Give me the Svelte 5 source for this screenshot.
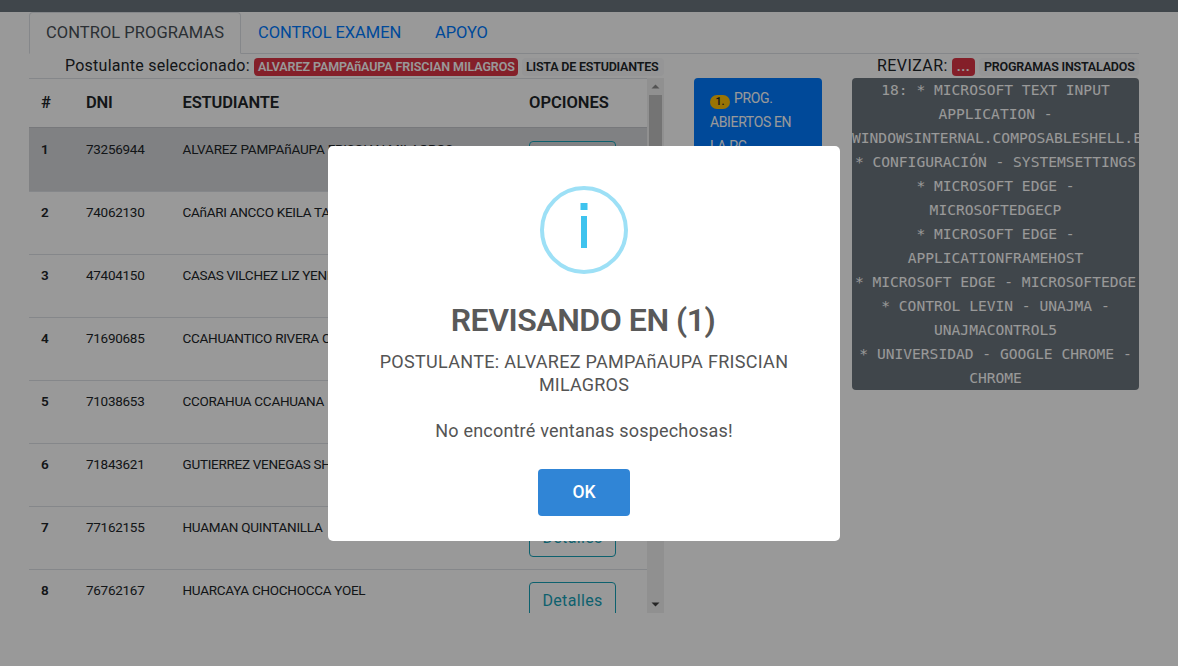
<script>
  const students = [
    ['73256944', 'ALVAREZ PAMPAñAUPA FRISCIAN MILAGROS'],
    ['74062130', 'CAñARI ANCCO KEILA TATIANA'],
    ['47404150', 'CASAS VILCHEZ LIZ YENI'],
    ['71690685', 'CCAHUANTICO RIVERA CARLOS'],
    ['71038653', 'CCORAHUA CCAHUANA'],
    ['71843621', 'GUTIERREZ VENEGAS SHEYLA'],
    ['77162155', 'HUAMAN QUINTANILLA'],
    ['76762167', 'HUARCAYA CHOCHOCCA YOEL']
  ];
  const programs = [
    '18: * MICROSOFT TEXT INPUT', 'APPLICATION -', 'WINDOWSINTERNAL.COMPOSABLESHELL.E',
    '* CONFIGURACIÓN - SYSTEMSETTINGS', '* MICROSOFT EDGE -', 'MICROSOFTEDGECP',
    '* MICROSOFT EDGE -', 'APPLICATIONFRAMEHOST', '* MICROSOFT EDGE - MICROSOFTEDGE',
    '* CONTROL LEVIN - UNAJMA -', 'UNAJMACONTROL5', '* UNIVERSIDAD - GOOGLE CHROME -', 'CHROME'
  ];
</script>

<div class="page">
  <header></header>
  <main>
    <nav>
      <a class="active" href="#programas">CONTROL PROGRAMAS</a>
      <a class="exam" href="#examen">CONTROL EXAMEN</a>
      <a href="#apoyo">APOYO</a>
    </nav>
    <div class="columns">
      <section>
        <div class="caption">
          <span class="who">Postulante seleccionado:</span>
          <b class="badge danger">ALVAREZ PAMPAñAUPA FRISCIAN MILAGROS</b>
          <b class="badge light">LISTA DE ESTUDIANTES</b>
        </div>
        <div class="scroller">
          <div class="rows">
            <div class="row head"><span>#</span><span>DNI</span><span>ESTUDIANTE</span><span class="opt">OPCIONES</span></div>
            {#each students as [dni, name], i}
              <div class="row" class:selected={i === 0}>
                <b>{i + 1}</b><span>{dni}</span><span class="name">{name}</span>
                <span class="action"><button class="details">Detalles</button></span>
              </div>
            {/each}
          </div>
          <div class="track">
            <svg width="17" height="17" viewBox="0 0 17 17"><path d="M4.5 10.5h8l-4-4z" fill="#8b8b8b" /></svg>
            <div class="thumb"></div>
            <svg width="17" height="17" viewBox="0 0 17 17"><path d="M4.5 6.5h8l-4 4z" fill="#404040" /></svg>
          </div>
        </div>
      </section>
      <section class="middle">
        <button class="open"><b class="pill">1.</b> PROG. ABIERTOS EN LA PC</button>
      </section>
      <section>
        <div class="caption">
          <span class="review">REVIZAR:</span>
          <b class="badge danger dots">...</b>
          <b class="badge light installed">PROGRAMAS INSTALADOS</b>
        </div>
        <div class="programs">
          {#each programs as line}<div>{line}</div>{/each}
        </div>
      </section>
    </div>
  </main>
  <div class="backdrop">
    <div class="modal" role="dialog">
      <svg class="icon" width="88" height="88" viewBox="0 0 88 88">
        <circle cx="44" cy="44" r="42" fill="none" stroke="#9de0f6" stroke-width="4" />
        <rect x="40.500" y="17" width="7" height="7" fill="#3fc3ee" />
        <rect x="41" y="30" width="6" height="32" fill="#3fc3ee" />
      </svg>
      <h2>REVISANDO EN (1)</h2>
      <p><span class="wide">POSTULANTE: ALVAREZ PAMPAñAUPA FRISCIAN</span><br />MILAGROS<br /><br />No encontré ventanas sospechosas!</p>
      <button class="ok">OK</button>
    </div>
  </div>
</div>

<style>
  :global(body) { margin: 0; }
  .page, .page * { box-sizing: border-box; }
  .page { height: 666px; overflow: hidden; font: 16px/24px Roboto, sans-serif; color: #212529; background: #fff; }
  header { height: 12px; background: #6c757d; }
  main { width: 1110px; margin-left: 29px; }
  nav { display: flex; height: 42px; border-bottom: 1px solid #dee2e6; font-size: 16.5px; }
  nav a { height: 42px; padding: 9px 17px 7px; color: #007bff; text-decoration: none; letter-spacing: -0.06px; white-space: nowrap; }
  nav .active { width: 212px; padding: 8px 16px 6px; color: #495057; background: #fff; border: 1px solid #dee2e6; border-bottom-color: #fff; border-radius: 4px 4px 0 0; letter-spacing: 0.05px; }
  nav .exam { width: 177px; }
  .columns { display: grid; grid-template-columns: 635px 128px 287px; gap: 30px; }
  .caption { display: flex; height: 24px; justify-content: flex-end; align-items: center; white-space: nowrap; }
  .who { width: 189px; letter-spacing: 0.24px; }
  .badge { height: 18px; margin-top: 2px; padding: 0 4px; border-radius: 4px; font-size: 12.5px; line-height: 17px; font-weight: 600; }
  .danger { width: 264px; color: #fff; background: #dc3545; letter-spacing: -0.08px; }
  .light { width: 142px; margin-left: 4px; background: #f8f9fa; letter-spacing: -0.21px; }
  .review { width: 75px; letter-spacing: 0.42px; }
  .dots { width: 23px; padding: 0; text-align: center; font-size: 14px; letter-spacing: 0.5px; }
  .installed { width: 160px; padding-left: 5px; letter-spacing: -0.2px; }
  .scroller { display: flex; height: 535px; overflow: hidden; }
  .rows { width: 618px; }
  .row { display: grid; grid-template-columns: 45px 96.500px 346.500px 130px; height: 63px; padding-top: 11px; border-top: 1px solid #dee2e6; font-size: 13.5px; line-height: 19px; letter-spacing: -0.28px; }
  .row > * { padding-left: 12px; white-space: nowrap; }
  .row b { font-weight: 600; }
  .head { height: 49px; padding-top: 12px; font-size: 16.5px; line-height: 24px; font-weight: 600; letter-spacing: -0.15px; }
  .opt { letter-spacing: 0; }
  .selected { height: 64px; padding-top: 12px; background: #d6d8db; border-top-color: #c6c9cd; }
  .selected .name { letter-spacing: -0.17px; }
  .action { padding-top: 1px; }
  .details { width: 87px; height: 38px; padding: 0; border: 1px solid #17a2b8; border-radius: 4px; background: none; color: #17a2b8; font: 16px/24px Roboto, sans-serif; letter-spacing: 0.35px; }
  .track { display: flex; flex-direction: column; justify-content: space-between; width: 17px; background: #f1f1f1; }
  .thumb { flex: 1; width: 13px; margin: 0 2px 100px; background: #c1c1c1; }
  .middle { padding-top: 24px; }
  .open { width: 128px; height: 88px; padding: 8px 16px; border: 0; border-radius: 4px; background: #007bff; color: #fff; font: 14px/24px Roboto, sans-serif; letter-spacing: -0.37px; text-align: left; }
  .pill { display: inline-block; width: 20px; height: 14px; margin-right: 1px; border-radius: 7px; background: #ffc107; color: #212529; font-size: 10.5px; line-height: 13px; font-weight: 600; text-align: center; letter-spacing: 0; vertical-align: -1.5px; }
  .programs { height: 312px; overflow: hidden; border-radius: 4px; background: #6c757d; color: #fff; font: 14.6px/24px "DejaVu Sans Mono", monospace; text-align: center; white-space: pre; }
  .backdrop { position: fixed; inset: 0; display: flex; justify-content: center; align-items: center; padding: 21px 0 0; background: rgba(0, 0, 0, 0.4); }
  .modal { display: flex; flex-direction: column; align-items: center; width: 512px; height: 395px; margin: 0 10px 0 0; padding-top: 40px; border-radius: 5px; background: #fff; text-align: center; }
  h2 { margin: 28px 0 0; color: #595959; font-size: 32px; line-height: 36px; font-weight: 600; letter-spacing: -0.47px; white-space: nowrap; padding-right: 2px; }
  p { margin: 12px 0 0; color: #545454; font-size: 18px; line-height: 23px; letter-spacing: 0.2px; white-space: nowrap; }
  .wide { letter-spacing: 0.3px; }
  .ok { width: 92px; height: 47px; margin-top: 27px; padding: 0 0 2px; border: 0; border-radius: 4px; background: #3085d6; color: #fff; font: 500 17.500px Roboto, sans-serif; }
</style>
